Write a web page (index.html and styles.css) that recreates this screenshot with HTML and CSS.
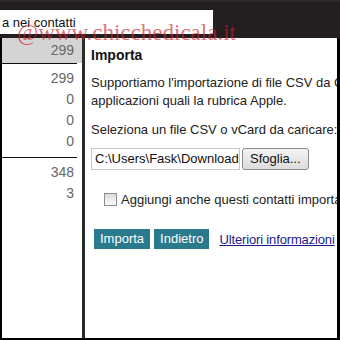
FILE: index.html
```html
<!DOCTYPE html>
<html lang="it">
<head>
    <meta charset="UTF-8">
    <title>Importa contatti</title>
    <link rel="stylesheet" href="styles.css">
</head>
<body>
<div class="frame">
    <div class="topbar">
        <div class="crumb">a nei contatti</div>
    </div>
    <div class="main">
        <div class="side">
            <div class="count selected">299</div>
            <div class="group">
                <div class="count">299</div>
                <div class="count">0</div>
                <div class="count">0</div>
                <div class="count">0</div>
            </div>
            <div class="group">
                <div class="count">348</div>
                <div class="count">3</div>
            </div>
        </div>
        <div class="content">
            <h2>Importa</h2>
            <p class="intro">Supportiamo l'importazione di file CSV da Gmail, Outlook, Outlook Express, Yahoo! Mail, Hotmail, Eudora e altre<br>applicazioni quali la rubrica Apple.</p>
            <p class="label">Seleziona un file CSV o vCard da caricare:</p>
            <div class="file-row">
                <span class="file-input">C:\Users\Fask\Downloads\contatti.csv</span>
                <span class="browse">Sfoglia...</span>
            </div>
            <label class="check">
                <span class="box"></span>
                Aggiungi anche questi contatti importati a:
            </label>
            <div class="actions">
                <span class="btn">Importa</span>
                <span class="btn">Indietro</span>
                <a class="more" href="#">Ulteriori informazioni</a>
            </div>
        </div>
    </div>
    <div class="watermark">@www.chicchedicala.it</div>
</div>
</body>
</html>
```

FILE: styles.css
```css
html, body {
    margin: 0;
    padding: 0;
    background: #000;
}

.frame {
    position: relative;
    width: 340px;
    height: 340px;
    overflow: hidden;
    font-family: "Liberation Sans", Arial, sans-serif;
    font-size: 13px;
    color: #222;
}

.topbar {
    height: 38px;
    background: #231f20;
    border-top: 2px solid #2e2a2b;
    box-sizing: border-box;
    padding-top: 8px;
}

.crumb {
    width: 211px;
    height: 24px;
    background: #fff;
    padding-left: 2px;
    line-height: 25px;
    font-size: 13px;
    color: #111;
    white-space: nowrap;
    overflow: hidden;
}

.main {
    display: flex;
    height: 300px;
    margin: 0 3px 2px 2px;
    background: #fff;
}

/* left column with counts */
.side {
    width: 80px;
    border-right: 3px solid #2b2b2b;
    color: #666;
    font-size: 14px;
}

.count {
    text-align: right;
    padding-right: 8px;
    height: 21px;
    line-height: 21px;
}

.count.selected {
    background: #d4d4d4;
    height: 25px;
    line-height: 25px;
}

.group {
    margin-right: 5px;
    border-top: 1px solid #111;
    padding: 4px 0 5px;
}

.group .count {
    padding-right: 3px;
}

/* right panel */
.content {
    flex: 1;
    padding: 8px 0 0 6px;
    white-space: nowrap;
    overflow: hidden;
}

h2 {
    margin: 0 0 10px;
    font-size: 14px;
    line-height: 18px;
    color: #111;
}

.intro {
    margin: 0 0 11px;
    line-height: 18px;
}

.label {
    margin: 0 0 9px;
    line-height: 18px;
}

.file-row {
    display: flex;
    gap: 2px;
    height: 22px;
}

.file-input {
    width: 141px;
    border: 1px solid #c8c8c8;
    padding: 0 3px;
    line-height: 20px;
    overflow: hidden;
    color: #111;
}

.browse {
    border: 1px solid #8a8a8a;
    border-radius: 3px;
    background: linear-gradient(#f4f4f4, #dcdcdc);
    padding: 0 7px;
    line-height: 20px;
    color: #111;
}

.check {
    display: flex;
    align-items: center;
    gap: 4px;
    margin: 20px 0 0 13px;
    height: 18px;
}

.box {
    flex-shrink: 0;
    width: 11px;
    height: 11px;
    border: 1px solid #8f8f8f;
    background: linear-gradient(#dcdcdc, #fafafa);
}

.actions {
    display: flex;
    align-items: center;
    gap: 4px;
    margin: 21px 0 0 3px;
}

.btn {
    background: #2a7a8e;
    color: #fff;
    padding: 0 6px;
    line-height: 20px;
}

.more {
    margin-left: 6px;
    color: #1a1a8c;
    letter-spacing: -0.15px;
}

.watermark {
    position: absolute;
    left: 17px;
    top: 20px;
    font-family: "Liberation Serif", "Times New Roman", serif;
    font-size: 23px;
    color: rgba(205, 30, 45, 0.65);
    white-space: nowrap;
}
```
